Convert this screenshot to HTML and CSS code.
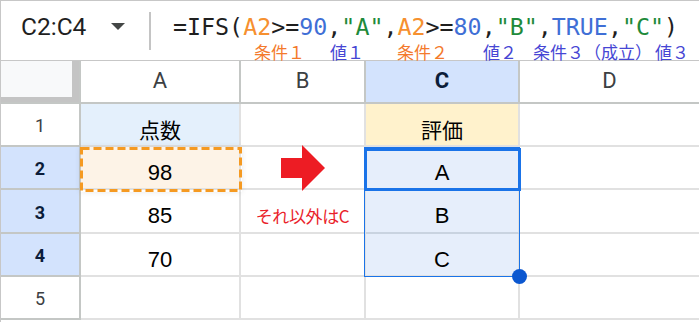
FILE: index.html
```html
<!DOCTYPE html>
<html lang="ja">
<head>
<meta charset="utf-8">
<link rel="stylesheet" href="styles.css">
</head>
<body>
<div class="sheet">
  <div class="fbar">
    <div class="namebox">
      <span class="ref">C2:C4</span>
      <span class="caret"></span>
    </div>
    <div class="sep"></div>
    <div class="formula">
      <div class="code">=IFS(<span class="o">A2</span>&gt;=<span class="n">90</span>,<span class="s">"A"</span>,<span class="o">A2</span>&gt;=<span class="n">80</span>,<span class="s">"B"</span>,<span class="n">TRUE</span>,<span class="s">"C"</span>)</div>
      <div class="labels">
        <span class="lb lo l1">条件１</span>
        <span class="lb lv l2">値１</span>
        <span class="lb lo l3">条件２</span>
        <span class="lb lv l4">値２</span>
        <span class="lb lv l5">条件３（成立）</span>
        <span class="lb lv l6">値３</span>
      </div>
    </div>
  </div>

  <div class="grid">
    <div class="corner"><div class="corner-in"></div></div>
    <div class="ch">A</div>
    <div class="ch">B</div>
    <div class="ch ch-sel">C</div>
    <div class="ch ch-last">D</div>

    <div class="rh">1</div>
    <div class="c c-blue">点数</div>
    <div class="c"></div>
    <div class="c c-yellow">評価</div>
    <div class="c c-last"></div>

    <div class="rh rh-sel">2</div>
    <div class="c c-copy">98
      <svg class="copy-mark" width="162" height="45" viewBox="0 0 162 45"><rect x="1.5" y="1.5" width="159" height="42" fill="none" stroke="#f59a22" stroke-width="3" stroke-dasharray="8 4"/></svg>
    </div>
    <div class="c c-arrow">
      <svg width="44" height="46" viewBox="0 0 44 46"><polygon points="0,13 21,13 21,0 44,23 21,46 21,33 0,33" fill="#ed1c24"/></svg>
    </div>
    <div class="c c-sel c-anchor">A
      <span class="range"><span class="handle"></span></span>
      <span class="active"></span>
    </div>
    <div class="c c-last"></div>

    <div class="rh rh-sel">3</div>
    <div class="c">85</div>
    <div class="c c-note">それ以外はC</div>
    <div class="c c-sel c-sel-mid">B</div>
    <div class="c c-last"></div>

    <div class="rh rh-sel">4</div>
    <div class="c">70</div>
    <div class="c"></div>
    <div class="c c-sel">C</div>
    <div class="c c-last"></div>

    <div class="rh">5</div>
    <div class="c"></div>
    <div class="c"></div>
    <div class="c"></div>
    <div class="c c-last"></div>
  </div>
</div>
</body>
</html>
```

FILE: styles.css
```css
* { box-sizing: border-box; margin: 0; padding: 0; }

body {
  width: 699px;
  height: 322px;
  overflow: hidden;
  background: #ffffff;
  font-family: Roboto, "Noto Sans CJK JP", sans-serif;
}

.sheet {
  width: 699px;
  height: 322px;
  border-top: 1px solid #c7c7c7;
  border-left: 1px solid #c7c7c7;
}

/* formula bar */
.fbar {
  height: 60px;
  display: flex;
  border-bottom: 1px solid #c7c7c7;
}

.namebox {
  width: 148px;
  display: flex;
  align-items: flex-start;
  padding: 11px 0 0 20px;
}

.ref {
  font-family: Roboto, sans-serif;
  font-size: 24.5px;
  line-height: 30px;
  color: #1f1f1f;
}

.caret {
  width: 0;
  height: 0;
  margin: 11px 0 0 25px;
  border-left: 7px solid transparent;
  border-right: 7px solid transparent;
  border-top: 7px solid #444746;
}

.sep {
  width: 2px;
  height: 38px;
  margin-top: 11px;
  background: #c4c4c4;
}

.formula {
  padding: 12px 0 0 22px;
  display: flex;
  flex-direction: column;
}

.code {
  font-family: "DejaVu Sans Mono", monospace;
  font-size: 23.3px;
  line-height: 27px;
  color: #1f1f1f;
  white-space: nowrap;
}

.code .o { color: #f6902f; }
.code .n { color: #3f6fd6; }
.code .s { color: #1e8a3a; }

.labels {
  display: flex;
  white-space: nowrap;
  margin-top: 3px;
}

.lb {
  font-family: "Noto Sans CJK JP", sans-serif;
  font-size: 17px;
  line-height: 17px;
}

.lo { color: #f47a2c; }
.lv { color: #4646d4; }

.l1 { margin-left: 81px; }
.l2 { margin-left: 25px; }
.l3 { margin-left: 33px; }
.l4 { margin-left: 35px; }
.l5 { margin-left: 16px; }
.l6 { margin-left: 3px; }

/* grid */
.grid {
  display: grid;
  grid-template-columns: 80px 160px 125px 154px 179px;
  grid-template-rows: 43px 43px 43px 44px 43px 43px;
}

.corner {
  border-right: 2px solid #c4c7c5;
  border-bottom: 2px solid #c4c7c5;
  display: flex;
}

.corner-in {
  flex: 1;
  background: #f8f9fa;
  border-right: 7px solid #c4c4c4;
  border-bottom: 5px solid #c4c4c4;
}

.ch {
  display: flex;
  align-items: center;
  justify-content: center;
  font-family: Roboto, sans-serif;
  font-size: 22px;
  color: #3c4043;
  border-right: 2px solid #c4c7c5;
  border-bottom: 2px solid #c4c7c5;
  padding-bottom: 2px;
}

.ch-sel {
  background: #d3e3fd;
  color: #0b1d3a;
  font-weight: 700;
}

.ch-last { border-right: none; }

.rh {
  display: flex;
  align-items: center;
  justify-content: center;
  font-family: Roboto, sans-serif;
  font-size: 18px;
  color: #3c4043;
  border-right: 2px solid #c4c7c5;
  border-bottom: 2px solid #c4c7c5;
  padding-top: 2px;
}

.rh-sel {
  background: #d3e3fd;
  color: #0b1d3a;
  font-weight: 700;
}

.c {
  display: flex;
  align-items: center;
  justify-content: center;
  font-family: "Liberation Sans", "Noto Sans CJK JP", sans-serif;
  font-size: 22px;
  color: #000000;
  border-right: 2px solid #e1e1e1;
  border-bottom: 2px solid #e1e1e1;
  padding-top: 10px;
}

.c-last { border-right: none; }

.c-blue {
  background: #e4f0fc;
  font-family: "Noto Sans CJK JP", sans-serif;
  font-size: 21px;
  padding-top: 8px;
}

.c-yellow {
  background: #fff2cc;
  font-family: "Noto Sans CJK JP", sans-serif;
  font-size: 21px;
  padding-top: 8px;
}

.c-copy {
  background: #fdf3e7;
  position: relative;
}

.c-arrow { padding-top: 0; }
.c-sel { background: #e6eefb; }
.c-sel-mid { border-bottom-color: #c9d3e0; }

.c-note {
  font-family: "Noto Sans CJK JP", sans-serif;
  font-size: 17px;
  color: #ea1f2b;
  padding-top: 8px;
  letter-spacing: -0.4px;
  white-space: nowrap;
}

/* overlays on top of cells */
.copy-mark {
  position: absolute;
  left: -1px;
  top: 0;
  display: block;
  box-shadow: 0 0 6px rgba(0, 0, 0, 0.09);
}

.c-anchor { position: relative; }

.range {
  position: absolute;
  left: -2px;
  top: 0;
  width: 156px;
  height: 130px;
  border: 1px solid #1a73e8;
  z-index: 2;
}

.handle {
  position: absolute;
  right: -8px;
  bottom: -8px;
  width: 15px;
  height: 15px;
  border-radius: 50%;
  background: #0b57d0;
}

.active {
  position: absolute;
  left: -2px;
  top: 1px;
  width: 157px;
  height: 43px;
  border: 3px solid #1a73e8;
  z-index: 3;
}
```
